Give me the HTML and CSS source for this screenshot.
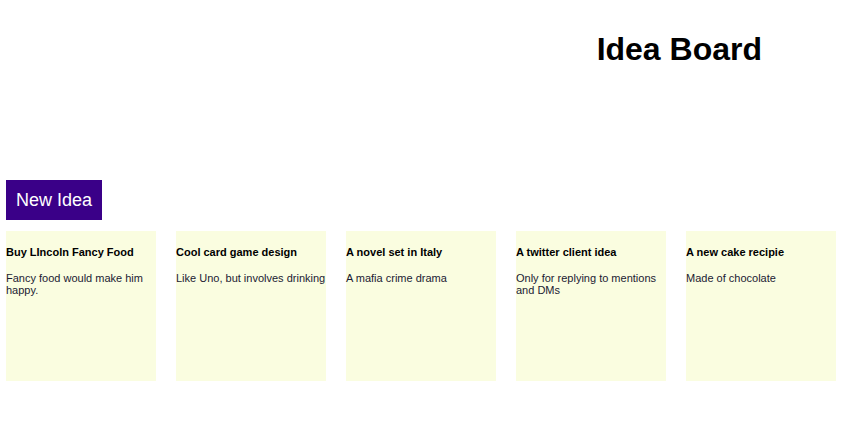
FILE: index.html
```html
<!DOCTYPE html>
<html>
<head>
<meta charset="utf-8">
<link rel="stylesheet" href="styles.css">
</head>
<body>
<div class="app">
  <header class="app-header">
    <h1 class="app-title">Idea Board</h1>
  </header>
  <div class="toolbar">
    <button class="new-idea">New Idea</button>
  </div>
  <div class="board">
    <div class="tile"><h4 class="tile-title">Buy LIncoln Fancy Food</h4><p class="tile-body">Fancy food would make him happy.</p></div>
    <div class="tile"><h4 class="tile-title">Cool card game design</h4><p class="tile-body">Like Uno, but involves drinking</p></div>
    <div class="tile"><h4 class="tile-title">A novel set in Italy</h4><p class="tile-body">A mafia crime drama</p></div>
    <div class="tile"><h4 class="tile-title">A twitter client idea</h4><p class="tile-body">Only for replying to mentions and DMs</p></div>
    <div class="tile"><h4 class="tile-title">A new cake recipie</h4><p class="tile-body">Made of chocolate</p></div>
  </div>
</div>
</body>
</html>
```
FILE: styles.css
```css
* { box-sizing: border-box; }
body {
  margin: 0;
  font-family: "Liberation Sans", Arial, sans-serif;
  background: #fff;
  color: #000;
}
.app { padding: 0 6px; }
.app-header {
  display: flex;
  justify-content: flex-end;
  height: 180px;
  padding-top: 31px;
  padding-right: 88px;
}
.app-title {
  margin: 0;
  font-size: 32px;
  font-weight: bold;
  line-height: normal;
}
.toolbar { display: flex; }
.new-idea {
  height: 40px;
  padding: 0 10px;
  border: none;
  background: #3a0088;
  color: #fff;
  font-family: "Liberation Sans", Arial, sans-serif;
  font-size: 18px;
}
.board {
  display: flex;
  gap: 20px;
  margin-top: 11px;
}
.tile {
  width: 150px;
  height: 150px;
  background: #fafde0;
  font-size: 11px;
  display: flow-root;
}
.tile-title {
  margin: 14.6px 0;
  font-size: 11px;
  font-weight: bold;
  color: #000;
}
.tile-body {
  margin: 0;
  color: #1a1a33;
  line-height: normal;
}
```
